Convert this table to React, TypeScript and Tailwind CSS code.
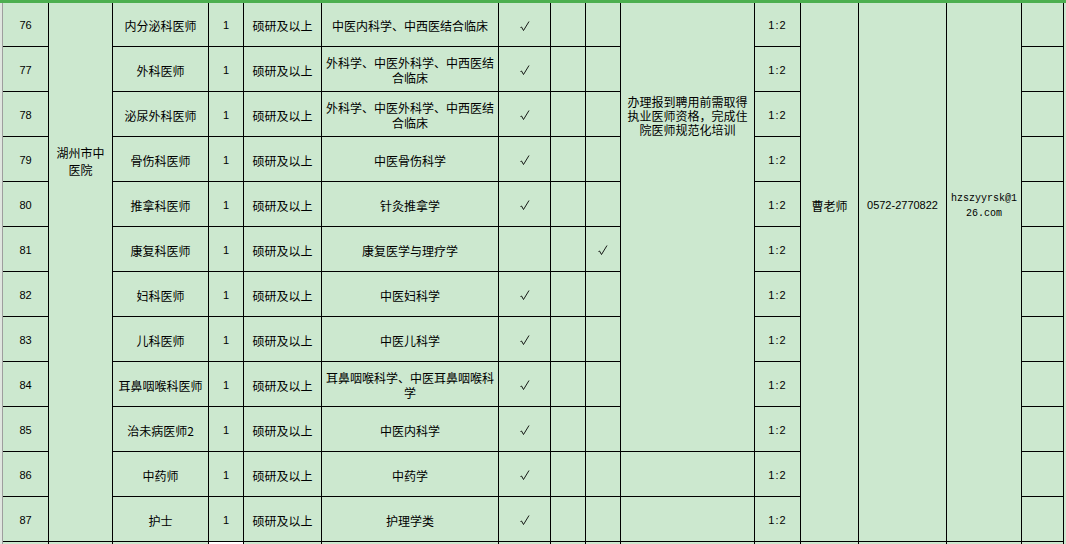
import React from 'react';

/* ========== data ========== */
type Row = { no: number; post: string; major: string; tick: 7 | 9 };

const rows: Row[] = [
  { no: 76, post: '内分泌科医师', major: '中医内科学、中西医结合临床', tick: 7 },
  { no: 77, post: '外科医师', major: '外科学、中医外科学、中西医结合临床', tick: 7 },
  { no: 78, post: '泌尿外科医师', major: '外科学、中医外科学、中西医结合临床', tick: 7 },
  { no: 79, post: '骨伤科医师', major: '中医骨伤科学', tick: 7 },
  { no: 80, post: '推拿科医师', major: '针灸推拿学', tick: 7 },
  { no: 81, post: '康复科医师', major: '康复医学与理疗学', tick: 9 },
  { no: 82, post: '妇科医师', major: '中医妇科学', tick: 7 },
  { no: 83, post: '儿科医师', major: '中医儿科学', tick: 7 },
  { no: 84, post: '耳鼻咽喉科医师', major: '耳鼻咽喉科学、中医耳鼻咽喉科学', tick: 7 },
  { no: 85, post: '治未病医师2', major: '中医内科学', tick: 7 },
  { no: 86, post: '中药师', major: '中药学', tick: 7 },
  { no: 87, post: '护士', major: '护理学类', tick: 7 },
];

const cell = 'bg-[#cce8cf] flex items-center justify-center text-center pt-[2px]';
const num = "font-['Liberation_Sans',sans-serif] text-[11px]";

/* the little SimSun-ish √ */
function Tick() {
  return (
    <svg width="10" height="10" viewBox="0 0 10 10" className="block">
      <polyline
        points="0.5,6.5 1.5,6 3.5,9.5 9,0.5"
        fill="none"
        stroke="#000"
        strokeWidth="0.9"
      />
    </svg>
  );
}

export default function App() {
  return (
    <div className="w-[1066px] h-[544px] overflow-hidden bg-[#cce8cf] text-black text-[12px] leading-[15px] font-['Noto_Sans_CJK_SC',sans-serif]">
      {/* green frame bar */}
      <div className="h-[3px] bg-[#4caf50]" />

      <div className="flex">
        {/* row header edge */}
        <div className="w-[2px] bg-[#dfe6df]" />
        <div className="w-px bg-[#9e9e9e]" />

        <div className="grid grid-cols-[45px_63px_95px_34px_77px_176px_51px_34px_34px_133px_45px_57px_87px_74px_41px] grid-rows-[43px_repeat(12,44px)] gap-px bg-black border-r border-black">
          {rows.map((r, i) => (
            <React.Fragment key={r.no}>
              <div className={`${cell} ${num}`}>{r.no}</div>
              {i === 0 && (
                <div className="bg-[#cce8cf] row-span-12 px-1 pt-[141px] text-center leading-[17px]">
                  湖州市中医院
                </div>
              )}
              <div className={cell}>{r.post}</div>
              <div className={`${cell} ${num}`}>1</div>
              <div className={cell}>硕研及以上</div>
              <div className={`${cell} px-[2px]`}>{r.major}</div>
              <div className={cell}>{r.tick === 7 && <Tick />}</div>
              <div className={cell} />
              <div className={cell}>{r.tick === 9 && <Tick />}</div>
              {i === 0 && (
                <div className="bg-[#cce8cf] row-span-10 px-[2px] pt-[92px] text-center leading-[14px]">
                  办理报到聘用前需取得执业医师资格，完成住院医师规范化培训
                </div>
              )}
              {i >= 10 && <div className={cell} />}
              <div className={`${cell} ${num} tracking-[1px]`}>1:2</div>
              {i === 0 && (
                <>
                  <div className="bg-[#cce8cf] row-span-12 pt-[195px] text-center">曹老师</div>
                  <div className={`bg-[#cce8cf] row-span-12 pt-[195px] text-center ${num}`}>
                    0572-2770822
                  </div>
                  <div className="bg-[#cce8cf] row-span-12 px-[3px] pt-[188px] text-center break-all font-['Liberation_Mono',monospace] text-[10px]">
                    hzszyyrsk@126.com
                  </div>
                </>
              )}
              <div className={cell} />
            </React.Fragment>
          ))}

          {/* next row, only its top edge shows */}
          {Array.from({ length: 15 }).map((_, k) => (
            <div key={k} className={k === 3 ? 'bg-white' : 'bg-[#cce8cf]'} />
          ))}
        </div>
      </div>
    </div>
  );
}
